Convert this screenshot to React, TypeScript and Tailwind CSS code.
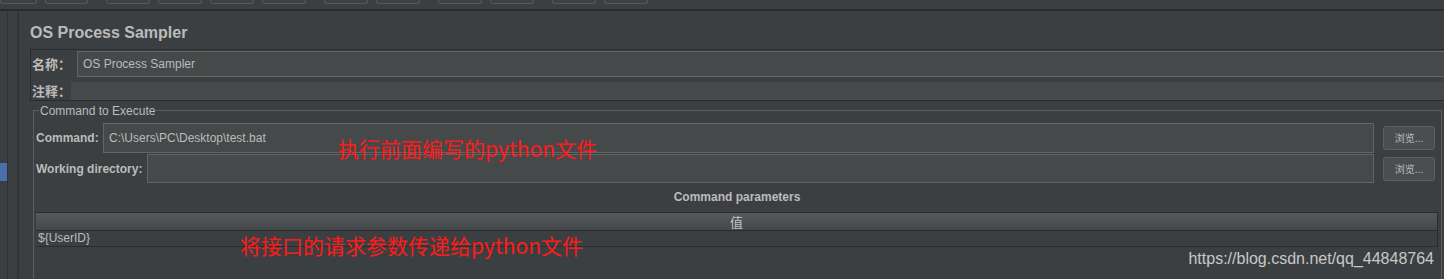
const TOOLBAR = [
  { w: 37, ml: 0 },
  { w: 43, ml: 8 },
  { w: 44, ml: 18 },
  { w: 44, ml: 8 },
  { w: 44, ml: 8 },
  { w: 44, ml: 8 },
  { w: 44, ml: 18 },
  { w: 44, ml: 8 },
  { w: 44, ml: 18 },
  { w: 44, ml: 8 },
  { w: 44, ml: 18 },
  { w: 44, ml: 8 },
];

const ui = "font-['Liberation_Sans','Noto_Sans_CJK_SC',sans-serif]";
const cjk = "font-['Noto_Sans_CJK_SC','Liberation_Sans',sans-serif]";

function BrowseButton() {
  return (
    <button
      className={`ml-[9px] mr-[6px] h-[24px] w-[52px] shrink-0 rounded-[3px] border border-[#5e6060] bg-[#4a4e50] text-[10px] leading-[22px] text-[#bbbbbb] ${cjk}`}
    >
      浏览...
    </button>
  );
}

export default function App() {
  return (
    <div className={`relative flex h-[279px] w-[1444px] flex-col overflow-hidden bg-[#3c3f41] text-[#bbbbbb] ${ui}`}>
      {/* toolbar tail */}
      <div className="flex h-[9px] items-start overflow-hidden">
        {TOOLBAR.map((b, i) => (
          <div
            key={i}
            style={{ width: b.w, marginLeft: b.ml }}
            className="h-[4px] rounded-b-[3px] border border-t-0 border-[#56595b] bg-[#3e4143]"
          />
        ))}
      </div>
      <div className="h-[2px] bg-[#2b2b2b]" />

      <div className="flex flex-1">
        {/* tree edge */}
        <div className="w-[7px] pt-[152px]">
          <div className="h-[18px] bg-[#4b6eaf]" />
        </div>
        <div className="w-[1px] bg-[#2f3133]" />
        <div className="w-[9px]" />
        <div className="w-[2px] bg-[#313335]" />

        {/* sampler panel */}
        <div className="flex flex-1 flex-col pl-[11px]">
          <div className="h-[38px] pt-[12px] text-[16px] font-bold leading-[20px] text-[#bbbbbb]">
            OS Process Sampler
          </div>

          <div className="flex h-[52px] flex-col border border-r-0 border-[#2b2b2b] pt-[1px]">
            <div className="flex h-[26px]">
              <div className={`w-[46px] pl-[1px] text-[13px] font-bold leading-[26px] ${cjk}`}>名称：</div>
              <div className="flex-1 border border-r-0 border-[#646464] bg-[#45494a] pl-[5px] text-[12px] leading-[24px]">
                OS Process Sampler
              </div>
            </div>
            <div className="mt-[5px] flex h-[18px]">
              <div className={`w-[40px] pl-[1px] text-[13px] font-bold leading-[18px] ${cjk}`}>注释：</div>
              <div className="flex-1 bg-[#45494a]" />
            </div>
          </div>

          {/* Command to Execute */}
          <div className="relative mt-[9px] ml-[3px] mr-[2px] flex-1 border border-b-0 border-[#5b5e60] pl-[2px]">
            <div className="absolute -top-[8px] left-[5px] bg-[#3c3f41] px-[1px] text-[12px] leading-[16px]">
              Command to Execute
            </div>

            <div className="mt-[12px] flex h-[30px] items-center">
              <div className="w-[67px] text-[12px] font-bold">Command:</div>
              <div className="h-full flex-1 border border-[#646464] bg-[#45494a] pl-[5px] text-[12px] leading-[28px]">
                C:\Users\PC\Desktop\test.bat
              </div>
              <BrowseButton />
            </div>

            <div className="mt-[1px] flex h-[29px] items-center">
              <div className="w-[111px] text-[12px] font-bold">Working directory:</div>
              <div className="h-full flex-1 border border-[#646464] bg-[#45494a]" />
              <BrowseButton />
            </div>

            <div className="mt-[6px] mr-[3px] text-center text-[12px] font-bold leading-[16px]">
              Command parameters
            </div>

            <div className="mt-[7px] mr-[3px] border-t border-r border-[#2b2b2b]">
              <div className={`h-[18px] border-b border-[#2b2b2b] bg-gradient-to-b from-[#55595c] to-[#45484a] text-center text-[13px] leading-[17px] text-[#c4c4c4] ${cjk}`}>
                值
              </div>
              <div className="h-[16px] border-b border-[#2b2b2b] pl-[2px] text-[12px] leading-[15px]">
                {"${UserID}"}
              </div>
            </div>
          </div>
        </div>
      </div>

      {/* annotations */}
      <div className={`absolute left-[338px] top-[136px] text-[21px] leading-[24px] text-[#ff1a1a] ${cjk}`}>
        执行前面编写的python文件
      </div>
      <div className={`absolute left-[240px] top-[233px] text-[21px] leading-[24px] text-[#ff1a1a] ${cjk}`}>
        将接口的请求参数传递给python文件
      </div>
      <div className="absolute right-[10px] top-[250px] font-['Liberation_Sans',sans-serif] text-[16px] leading-[18px] text-[#c8c8c8]">
        https://blog.csdn.net/qq_44848764
      </div>
    </div>
  );
}
